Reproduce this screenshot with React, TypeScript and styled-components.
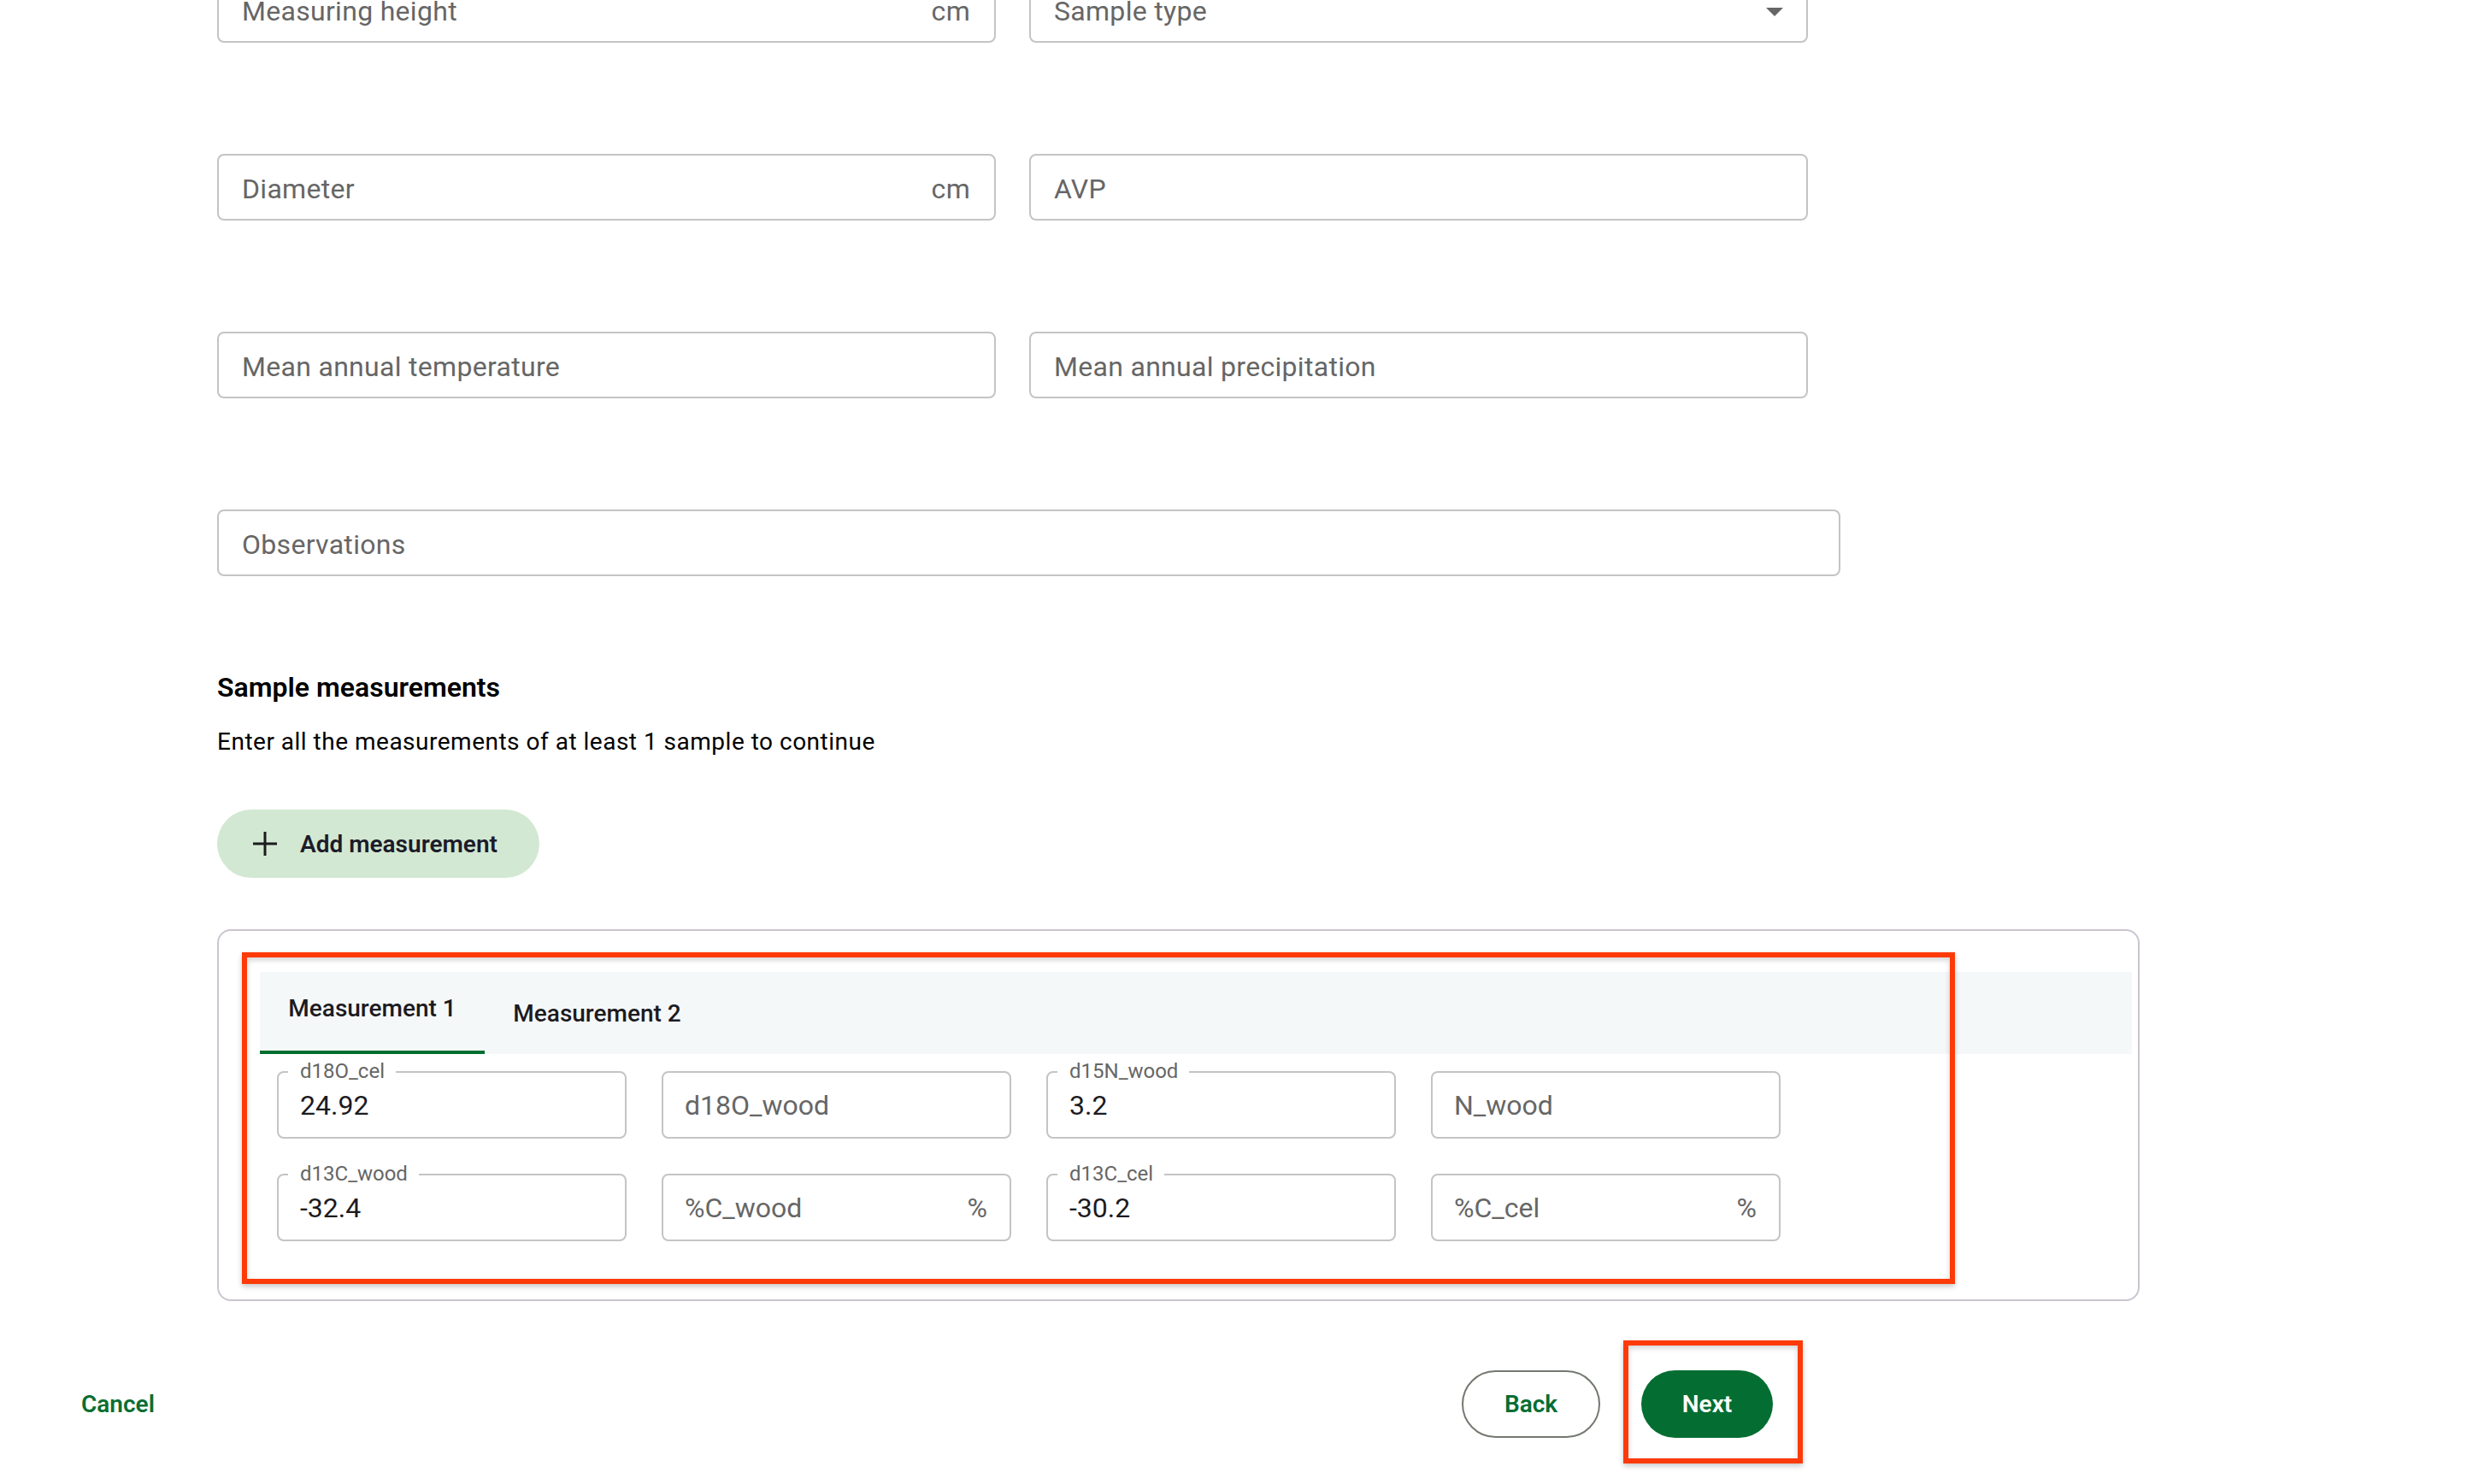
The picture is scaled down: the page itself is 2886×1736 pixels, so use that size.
import React from "react";
import styled, { createGlobalStyle } from "styled-components";

const GlobalStyle = createGlobalStyle`
  html, body {
    margin: 0;
    padding: 0;
    background: #fff;
  }
  body {
    font-family: Roboto, "Liberation Sans", sans-serif;
    color: #1c1b1f;
  }
  * {
    box-sizing: border-box;
  }
`;

const Page = styled.div`
  margin-top: -28px;
  padding-bottom: 60px;
`;

const Form = styled.div`
  padding-left: 254px;
`;

const FieldGrid = styled.div`
  display: grid;
  grid-template-columns: 911px 911px;
  column-gap: 39px;
  row-gap: 130px;
`;

const Field = styled.div<{ $wide?: boolean }>`
  grid-column: ${(p) => (p.$wide ? "1 / -1" : "auto")};
  width: ${(p) => (p.$wide ? "1899px" : "auto")};
  height: 78px;
  border: 2px solid #c4c4c4;
  border-radius: 8px;
  display: flex;
  align-items: center;
  justify-content: space-between;
  padding: 3px 28px 0 27px;
  font-size: 32px;
  letter-spacing: 0.3px;
  color: #666;
`;

const Adornment = styled.span`
  color: #666;
  font-size: 32px;
`;

const SelectArrow = styled.svg`
  width: 48px;
  height: 48px;
  margin-right: -15px;
  fill: #666;
`;

const SectionTitle = styled.h2`
  margin: 110px 0 0;
  font-size: 32px;
  line-height: 40px;
  font-weight: 600;
  color: #000;
`;

const SectionHint = styled.p`
  margin: 24px 0 0;
  font-size: 28px;
  line-height: 40px;
  letter-spacing: 0.5px;
  color: #000;
`;

const AddButton = styled.button`
  margin-top: 59px;
  height: 80px;
  width: 377px;
  border: 0;
  border-radius: 40px;
  background: #d3e8d2;
  display: flex;
  align-items: center;
  gap: 27px;
  padding: 0 0 0 42px;
  font-family: inherit;
  font-size: 28px;
  font-weight: 600;
  color: #1c1b2a;
`;

const Card = styled.div`
  position: relative;
  margin-top: 60px;
  width: 2249px;
  border: 2px solid #cac4d0;
  border-radius: 16px;
  padding: 48px 7px 48px 48px;
`;

const TabBar = styled.div`
  display: flex;
  height: 96px;
  background: #f5f8f9;
`;

const Tab = styled.div<{ $active?: boolean }>`
  width: 263px;
  display: flex;
  align-items: center;
  justify-content: center;
  font-size: 28px;
  font-weight: 500;
  color: #1c1b1f;
  padding-bottom: ${(p) => (p.$active ? "8px" : "0")};
  border-bottom: ${(p) => (p.$active ? "4px solid #006e2f" : "0")};
`;

const Panel = styled.div`
  padding: 20px;
  display: grid;
  grid-template-columns: repeat(4, 409px);
  column-gap: 41px;
  row-gap: 41px;
`;

const MeasureBox = styled.div<{ $filled?: boolean }>`
  position: relative;
  height: 79px;
  border: 2px solid #c4c4c4;
  border-radius: 8px;
  display: flex;
  align-items: center;
  justify-content: space-between;
  padding: 0 26px 0 25px;
  font-size: 32px;
  color: ${(p) => (p.$filled ? "#1c1b1f" : "#666")};
`;

const FloatLabel = styled.span`
  position: absolute;
  left: 11px;
  top: -16px;
  padding: 0 13px 0 14px;
  background: #fff;
  font-size: 24px;
  line-height: 28px;
  color: #666;
`;

const Annotation = styled.div`
  position: absolute;
  border: 6px solid #fd3a08;
  box-shadow: 0 3px 6px rgba(0, 0, 0, 0.22), inset 0 3px 6px rgba(0, 0, 0, 0.18);
  pointer-events: none;
`;

const TabsAnnotation = styled(Annotation)`
  left: 27px;
  top: 25px;
  width: 2004px;
  height: 388px;
`;

const NextAnnotation = styled(Annotation)`
  left: -21px;
  top: -35px;
  right: -35px;
  bottom: -30px;
`;

const Footer = styled.div`
  margin-top: 81px;
  width: 2074px;
  padding-left: 95px;
  display: flex;
  align-items: center;
  justify-content: space-between;
`;

const CancelLink = styled.span`
  font-size: 28px;
  font-weight: 600;
  color: #0b6e32;
`;

const Actions = styled.div`
  display: flex;
  gap: 48px;
`;

const PillButton = styled.button<{ $primary?: boolean }>`
  height: 79px;
  width: ${(p) => (p.$primary ? "154px" : "162px")};
  border-radius: 40px;
  border: ${(p) => (p.$primary ? "0" : "2px solid #737970")};
  background: ${(p) => (p.$primary ? "#046e32" : "#fff")};
  color: ${(p) => (p.$primary ? "#fff" : "#046e32")};
  font-family: inherit;
  font-size: 28px;
  font-weight: 600;
`;

const NextWrap = styled.div`
  position: relative;
`;

type Measure = { label: string; value?: string; unit?: string };

const measures: Measure[] = [
  { label: "d18O_cel", value: "24.92" },
  { label: "d18O_wood" },
  { label: "d15N_wood", value: "3.2" },
  { label: "N_wood" },
  { label: "d13C_wood", value: "-32.4" },
  { label: "%C_wood", unit: "%" },
  { label: "d13C_cel", value: "-30.2" },
  { label: "%C_cel", unit: "%" },
];

function PlusIcon() {
  return (
    <svg width="28" height="28" viewBox="0 0 28 28">
      <path d="M14 0v28M0 14h28" stroke="#1c1b1f" strokeWidth="3" fill="none" />
    </svg>
  );
}

export default function App() {
  return (
    <Page>
      <GlobalStyle />
      <Form>
        <FieldGrid>
          <Field>
            <span>Measuring height</span>
            <Adornment>cm</Adornment>
          </Field>
          <Field>
            <span>Sample type</span>
            <SelectArrow viewBox="0 0 24 24">
              <path d="M7 10l5 5 5-5z" />
            </SelectArrow>
          </Field>
          <Field>
            <span>Diameter</span>
            <Adornment>cm</Adornment>
          </Field>
          <Field>
            <span>AVP</span>
          </Field>
          <Field>
            <span>Mean annual temperature</span>
          </Field>
          <Field>
            <span>Mean annual precipitation</span>
          </Field>
          <Field $wide>
            <span>Observations</span>
          </Field>
        </FieldGrid>

        <SectionTitle>Sample measurements</SectionTitle>
        <SectionHint>Enter all the measurements of at least 1 sample to continue</SectionHint>

        <AddButton>
          <PlusIcon />
          Add measurement
        </AddButton>

        <Card>
          <TabBar>
            <Tab $active>Measurement 1</Tab>
            <Tab>Measurement 2</Tab>
          </TabBar>
          <Panel>
            {measures.map((m) => (
              <MeasureBox key={m.label} $filled={!!m.value}>
                {m.value ? (
                  <>
                    <FloatLabel>{m.label}</FloatLabel>
                    <span>{m.value}</span>
                  </>
                ) : (
                  <span>{m.label}</span>
                )}
                {m.unit && <Adornment>{m.unit}</Adornment>}
              </MeasureBox>
            ))}
          </Panel>
          <TabsAnnotation />
        </Card>
      </Form>

      <Footer>
        <CancelLink>Cancel</CancelLink>
        <Actions>
          <PillButton>Back</PillButton>
          <NextWrap>
            <PillButton $primary>Next</PillButton>
            <NextAnnotation />
          </NextWrap>
        </Actions>
      </Footer>
    </Page>
  );
}
